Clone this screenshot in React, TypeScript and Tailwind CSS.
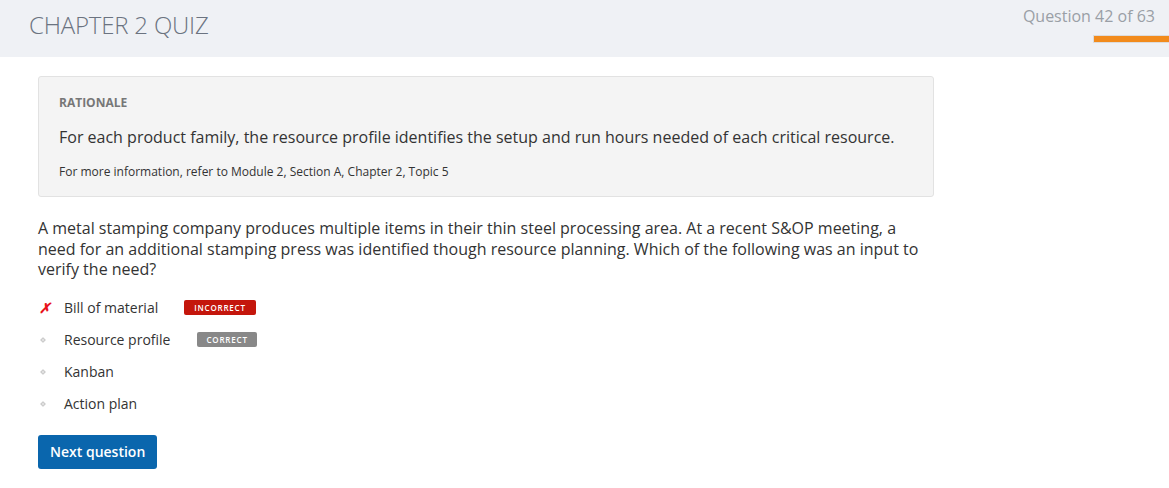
import React from "react";

type Option = {
  label: string;
  status?: "incorrect" | "correct";
  picked?: boolean;
};

const options: Option[] = [
  { label: "Bill of material", status: "incorrect", picked: true },
  { label: "Resource profile", status: "correct" },
  { label: "Kanban" },
  { label: "Action plan" },
];

const font = { fontFamily: '"Open Sans", "Noto Sans", sans-serif' };

export default function App() {
  return (
    <div className="min-h-[488px] bg-white text-[#333]" style={font}>
      {/* header */}
      <div className="flex h-[57px] justify-between bg-[#eff1f5]">
        <h1 className="pl-[29px] pt-[7px] text-[24px] font-light tracking-[-0.2px] text-[#6b7380]">
          CHAPTER 2 QUIZ
        </h1>
        <div className="flex flex-col items-end pt-[5px]">
          <div className="pr-[14px] text-[16px] leading-[22px] text-[#9a9fa6]">Question 42 of 63</div>
          <div className="mt-[8px] h-[8px] w-[76px] border-y border-l border-[#dcdcdc] bg-[#f28b1c]" />
        </div>
      </div>

      <div className="pl-[38px] pt-[19px]">
        {/* rationale */}
        <div className="w-[896px] rounded-[3px] border border-[#e2e2e2] bg-[#f4f4f4] px-[20px] pb-[15px] pt-[17px]">
          <div className="text-[12px] font-bold leading-[18px] text-[#777]">RATIONALE</div>
          <p className="mt-[14px] text-[16px] leading-[22px] text-[#333]">
            For each product family, the resource profile identifies the setup and run hours needed of each critical resource.
          </p>
          <p className="mt-[15px] text-[12px] leading-[18px] text-[#333]">
            For more information, refer to Module 2, Section A, Chapter 2, Topic 5
          </p>
        </div>

        {/* question */}
        <p className="mt-[21px] w-[890px] text-[16px] leading-[20.6px] text-[#333]">
          A metal stamping company produces multiple items in their thin steel processing area. At a recent S&amp;OP meeting, a need for an additional stamping press was identified though resource planning. Which of the following was an input to verify the need?
        </p>

        <ul className="mt-[12px] flex flex-col">
          {options.map((o) => (
            <li key={o.label} className="flex h-[32px] items-center">
              <span className="flex w-[26px] items-center">
                {o.picked ? (
                  <span className="pl-[1px] text-[14px] font-bold italic leading-none text-[#e8141b]">✗</span>
                ) : (
                  <span className="ml-[3px] h-[4px] w-[4px] rotate-45 border border-[#c8c8c8] bg-[#e4e4e4]" />
                )}
              </span>
              <span className="text-[14px] text-[#333]">{o.label}</span>
              {o.status === "incorrect" && (
                <span className="ml-[26px] flex h-[15px] items-center rounded-[2px] bg-[#c4160c] px-[10px] text-[8px] font-semibold tracking-[0.8px] text-white">
                  INCORRECT
                </span>
              )}
              {o.status === "correct" && (
                <span className="ml-[27px] flex h-[15px] items-center rounded-[2px] bg-[#888] px-[9px] text-[8px] font-semibold tracking-[0.8px] text-white">
                  CORRECT
                </span>
              )}
            </li>
          ))}
        </ul>

        <button className="mt-[15px] h-[34px] rounded-[3px] bg-[#0a66ad] px-[12px] text-[14px] font-semibold text-white">
          Next question
        </button>
      </div>
    </div>
  );
}
